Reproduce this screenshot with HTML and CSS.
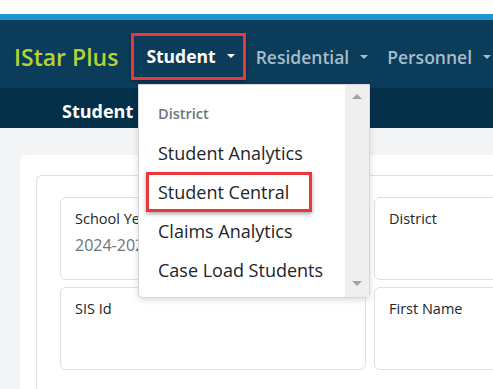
FILE: index.html
```html
<!DOCTYPE html>
<html lang="en">
<head>
    <meta charset="UTF-8">
    <meta name="viewport" content="width=device-width, initial-scale=1.0">
    <title>IStar Plus - Student Central</title>
    <link rel="stylesheet" href="styles.css">
</head>
<body>
    <div class="top-gap"></div>
    <nav class="navbar">
        <span class="brand">IStar Plus</span>
        <ul class="nav-menu">
            <li class="nav-item active"><span class="highlight">Student <span class="caret"></span></span></li>
            <li class="nav-item">Residential <span class="caret"></span></li>
            <li class="nav-item">Personnel <span class="caret"></span></li>
        </ul>
    </nav>
    <div class="subbar">
        <h2 class="page-title">Student</h2>
    </div>

    <main class="page">
        <div class="card">
            <div class="panel">
                <div class="fields">
                    <div class="field">
                        <div class="field-label">School Year</div>
                        <div class="field-value">2024-2025</div>
                    </div>
                    <div class="field">
                        <div class="field-label">District</div>
                    </div>
                    <div class="field">
                        <div class="field-label">SIS Id</div>
                    </div>
                    <div class="field">
                        <div class="field-label">First Name</div>
                    </div>
                </div>
            </div>
        </div>
    </main>

    <div class="dropdown">
        <div class="dropdown-list">
            <div class="dropdown-header">District</div>
            <div class="dropdown-item">Student Analytics</div>
            <div class="dropdown-item"><span class="highlight-item">Student Central</span></div>
            <div class="dropdown-item">Claims Analytics</div>
            <div class="dropdown-item">Case Load Students</div>
        </div>
        <div class="scrollbar">
            <span class="arrow-up"></span>
            <span class="arrow-down"></span>
        </div>
    </div>
</body>
</html>
```

FILE: styles.css
```css
body {
    margin: 0;
    width: 493px;
    height: 389px;
    background-color: #ffffff;
    font-family: "Open Sans", Arial, sans-serif;
    color: #212529;
    overflow: hidden;
}
.top-gap {
    height: 14px;
    background-color: #ffffff;
}
.navbar {
    display: flex;
    align-items: center;
    box-sizing: border-box;
    height: 74px;
    border-top: 6px solid #1d95d2;
    background-color: #0b3c5a;
    padding: 5px 0 0 14px;
    white-space: nowrap;
    overflow: hidden;
}
.brand {
    color: #b6d333;
    font-size: 23px;
    font-weight: 600;
    margin-right: 13px;
}
.nav-menu {
    display: flex;
    list-style: none;
    margin: 0;
    padding: 0;
}
.nav-item {
    display: flex;
    align-items: center;
    color: #a7bdca;
    font-size: 17.5px;
    font-weight: 600;
    margin-right: 19px;
}
.nav-item.active {
    color: #ffffff;
    font-weight: 700;
    margin-right: 10px;
}
.highlight {
    display: flex;
    align-items: center;
    border: 3px solid #e8383b;
    padding: 8px 8px 9px 12px;
    box-shadow: 0 1px 3px rgba(0, 0, 0, 0.4);
}
.caret {
    display: inline-block;
    width: 0;
    height: 0;
    margin-left: 11px;
    border-left: 4px solid transparent;
    border-right: 4px solid transparent;
    border-top: 4px solid currentColor;
}
.subbar {
    height: 40px;
    background-color: #05304a;
    padding-left: 62px;
}
.page-title {
    margin: 0;
    color: #ffffff;
    font-size: 18px;
    font-weight: 700;
    line-height: 46px;
}
.page {
    background-color: #f3f4f6;
    padding: 27px 0 0 20px;
    height: 234px;
    overflow: hidden;
}
.card {
    background-color: #ffffff;
    border-radius: 6px 0 0 0;
    padding: 20px 0 0 16px;
    height: 214px;
}
.panel {
    border: 1px solid #dcdfe3;
    border-right: none;
    border-bottom: none;
    border-radius: 6px 0 0 0;
    padding: 21px 0 0 23px;
    height: 193px;
    overflow: hidden;
}
.fields {
    display: grid;
    grid-template-columns: 306px 306px;
    column-gap: 8px;
    row-gap: 7px;
}
.field {
    border: 1px solid #dcdfe3;
    border-radius: 6px;
    padding: 10px 14px;
    box-sizing: border-box;
    height: 83px;
}
.field-label {
    font-size: 14.5px;
    color: #212529;
    line-height: 22px;
}
.field-value {
    font-size: 16px;
    color: #6c757d;
    margin-top: 4px;
}
.dropdown {
    position: absolute;
    left: 138px;
    top: 84px;
    width: 232px;
    height: 214px;
    display: flex;
    background-color: #ffffff;
    border: 1px solid #d6d9dc;
    border-radius: 0 0 5px 5px;
    box-shadow: 0 2px 6px rgba(0, 0, 0, 0.15);
    box-sizing: border-box;
}
.dropdown-list {
    flex: 1;
    padding-top: 17px;
}
.dropdown-header {
    padding-left: 19px;
    font-size: 14.5px;
    font-weight: 600;
    color: #6c757d;
    line-height: 24px;
    margin-bottom: 15px;
}
.dropdown-item {
    padding-left: 19px;
    font-size: 18px;
    line-height: 24px;
    height: 39px;
    white-space: nowrap;
}
.highlight-item {
    display: inline-block;
    margin-left: -12px;
    padding: 5px 20px 5px 9px;
    margin-top: -8px;
    border: 3px solid #e8383b;
    box-shadow: 0 2px 4px rgba(0, 0, 0, 0.35);
}
.scrollbar {
    position: relative;
    width: 24px;
    background-color: #efefef;
}
.arrow-up,
.arrow-down {
    position: absolute;
    left: 7px;
    width: 0;
    height: 0;
    border-left: 5px solid transparent;
    border-right: 5px solid transparent;
}
.arrow-up {
    top: 9px;
    border-bottom: 5px solid #a3a3a3;
}
.arrow-down {
    bottom: 11px;
    border-top: 5px solid #a3a3a3;
}
```
